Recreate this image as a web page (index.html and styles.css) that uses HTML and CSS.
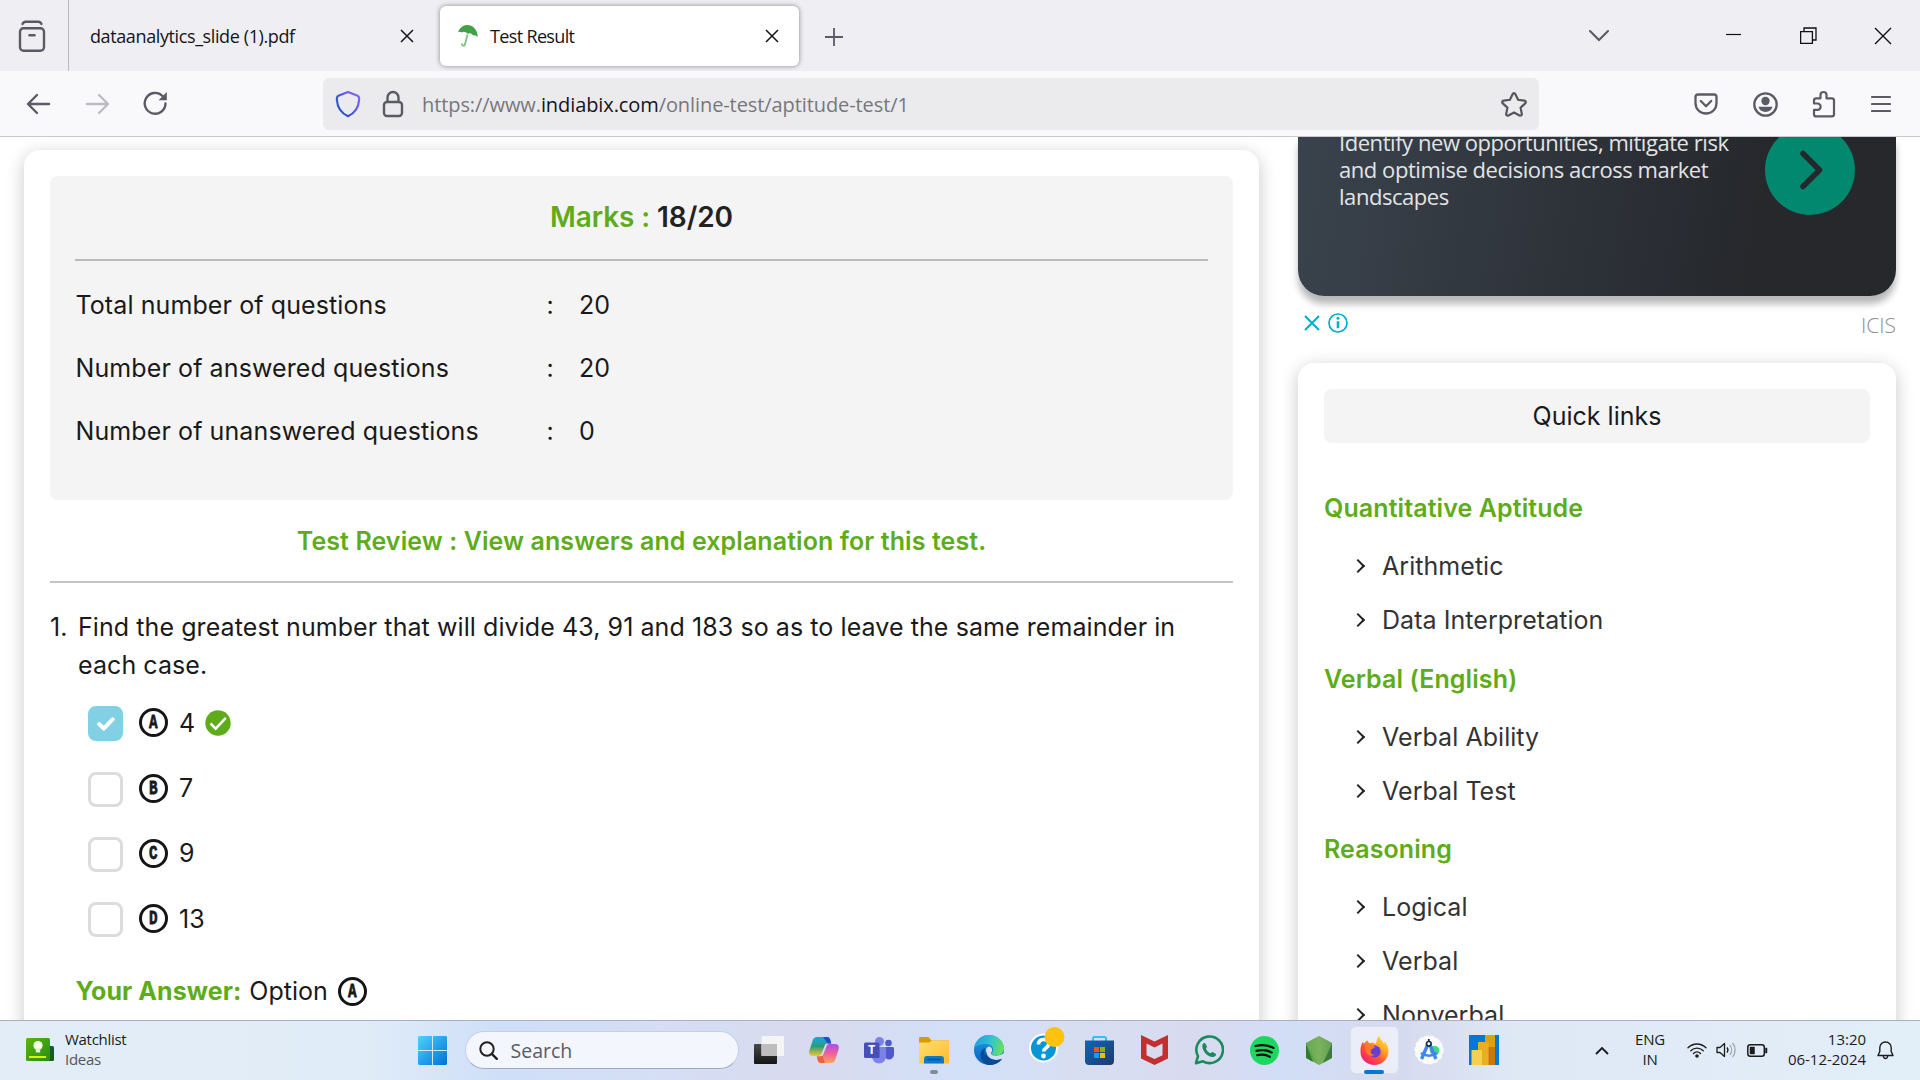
FILE: index.html
```html
<!DOCTYPE html>
<html lang="en">
<head>
<meta charset="utf-8">
<title>Test Result</title>
<link rel="stylesheet" href="styles.css">
</head>
<body>
<svg width="0" height="0" class="defs">
  <defs>
    <linearGradient id="shieldG" x1="0" y1="1" x2="1" y2="0"><stop offset="0" stop-color="#1d4fc4"/><stop offset=".5" stop-color="#4a5be0"/><stop offset="1" stop-color="#9a62ee"/></linearGradient>
    <linearGradient id="winG" x1="0" y1="0" x2="1" y2="1"><stop offset="0" stop-color="#4fd3ff"/><stop offset="1" stop-color="#0071d4"/></linearGradient>
    <linearGradient id="copA" x1="0" y1="0" x2="0" y2="1"><stop offset="0" stop-color="#18a5e8"/><stop offset=".5" stop-color="#2a9d7a"/><stop offset="1" stop-color="#f2c92a"/></linearGradient>
    <linearGradient id="copB" x1="0" y1="0" x2="0" y2="1"><stop offset="0" stop-color="#a64ff0"/><stop offset=".5" stop-color="#f0609a"/><stop offset="1" stop-color="#ffa45c"/></linearGradient>
    <linearGradient id="foldG" x1="0" y1="0" x2="1" y2="1"><stop offset="0" stop-color="#ffdf70"/><stop offset="1" stop-color="#fdbc2a"/></linearGradient>
    <linearGradient id="edgeA" x1="0" y1=".3" x2="1" y2=".5"><stop offset="0" stop-color="#1d9fe0"/><stop offset=".55" stop-color="#35c3d0"/><stop offset="1" stop-color="#6be05a"/></linearGradient>
    <linearGradient id="edgeB" x1="0" y1="0" x2="0" y2="1"><stop offset="0" stop-color="#1f9de4"/><stop offset="1" stop-color="#0a5fc0"/></linearGradient>
    <linearGradient id="storeG" x1="0" y1="0" x2="1" y2="1"><stop offset="0" stop-color="#0a68b8"/><stop offset="1" stop-color="#233a66"/></linearGradient>
    <linearGradient id="nodeG" x1="0" y1="0" x2="1" y2="0"><stop offset="0" stop-color="#4a9c3c"/><stop offset=".5" stop-color="#74ad58"/><stop offset="1" stop-color="#4c8f42"/></linearGradient>
    <linearGradient id="foxG" x1="1" y1="0" x2=".2" y2="1"><stop offset="0" stop-color="#fff04a"/><stop offset=".35" stop-color="#ffb02a"/><stop offset=".65" stop-color="#ff5535"/><stop offset="1" stop-color="#f01878"/></linearGradient>
    <linearGradient id="tvG" x1="0" y1="0" x2="0" y2="1"><stop offset="0" stop-color="#484848"/><stop offset="1" stop-color="#151515"/></linearGradient>
    <linearGradient id="watchG" x1="0" y1="0" x2="1" y2="1"><stop offset="0" stop-color="#56b80e"/><stop offset="1" stop-color="#2b8c14"/></linearGradient>
  </defs>
</svg>

<header class="tabs">
  <div class="recent">
    <svg width="28" height="34" viewBox="0 0 28 34" fill="none" stroke="#5b5b66" stroke-width="2.4" stroke-linecap="round"><path d="M4.500 4q1-2.300 3-2.300h13q2 0 3 2.300"/><rect x="2" y="8.200" width="24" height="22.500" rx="3.500"/><path d="M11.500 15.200h5"/></svg>
  </div>
  <div class="tab"><span class="tab-title t1">dataanalytics_slide (1).pdf</span><svg class="x" viewBox="0 0 14 14"><path d="M1 1l12 12M13 1L1 13"/></svg></div>
  <div class="tab active">
    <svg class="fav" width="22" height="24" viewBox="0 0 22 22" preserveAspectRatio="none"><path d="M1 7.500C3 2 9-.5 14 1.500c4.500 2 7 6 6.500 10.500-1.500-1.600-3-2-4.500-1.500-1.500-2-3-2.400-5-1.500C8.500 7 6.500 6.500 5 7.800 3.500 6.800 2.200 6.800 1 7.500z" fill="#43a047"/><path d="M10.500 9.500L8 18.500c-.6 2.200-3.500 1.600-3-.7" fill="none" stroke="#86bd86" stroke-width="1.800"/></svg>
    <span class="tab-title t2">Test Result</span><svg class="x" viewBox="0 0 14 14"><path d="M1 1l12 12M13 1L1 13"/></svg></div>
  <svg class="plus" width="20" height="20" viewBox="0 0 20 20"><path d="M10 1v18M1 10h18" stroke="#5b5b66" stroke-width="1.800"/></svg>
  <div class="winbtns">
    <svg width="22" height="14" viewBox="0 0 22 14"><path d="M2 2l9 9 9-9" fill="none" stroke="#5b5b66" stroke-width="2.100" stroke-linecap="round"/></svg>
    <svg width="16" height="16" viewBox="0 0 16 16"><path d="M0 6.500h15" stroke="#111" stroke-width="1.200"/></svg>
    <svg width="17" height="17" viewBox="0 0 17 17"><path d="M.6 4.600h11.800v11.800H.6zM4 4.600V1h12v12h-3.500" fill="none" stroke="#111" stroke-width="1.300"/></svg>
    <svg width="18" height="18" viewBox="0 0 18 18"><path d="M1 1l16 16M17 1L1 17" stroke="#111" stroke-width="1.400"/></svg>
  </div>
</header>

<nav class="toolbar">
  <div class="navbtns">
    <svg width="25" height="24" viewBox="0 0 25 22"><path d="M23 11H2.500M11 2L2 11l9 9" fill="none" stroke="#5b5b66" stroke-width="2.400" stroke-linecap="round" stroke-linejoin="round"/></svg>
    <svg width="25" height="24" viewBox="0 0 25 22"><path d="M2 11h20.500M14 2l9 9-9 9" fill="none" stroke="#bcbcc3" stroke-width="2.400" stroke-linecap="round" stroke-linejoin="round"/></svg>
    <svg width="25" height="25" viewBox="0 0 25 25"><path d="M22.500 12.500a10.400 10.400 0 1 1-3-7.500" fill="none" stroke="#5b5b66" stroke-width="2.400" stroke-linecap="round"/><path d="M23.800 1v8.200h-8.200z" fill="#5b5b66"/></svg>
  </div>
  <div class="urlbar">
    <svg width="26" height="28" viewBox="0 0 26 28"><path d="M13 2l9.600 3.800c1.600.7 1.700 1.700 1.500 4.200C23.600 17 20 23 13 26.200 6 23 2.400 17 1.900 10c-.2-2.500-.1-3.500 1.500-4.200z" fill="none" stroke="url(#shieldG)" stroke-width="2.200" stroke-linejoin="round"/></svg>
    <svg width="22" height="28" viewBox="0 0 22 28"><rect x="2" y="12" width="18" height="14" rx="3" fill="none" stroke="#5b5b66" stroke-width="2.400"/><path d="M5.500 12V7.500a5.500 5.500 0 0 1 11 0V12" fill="none" stroke="#5b5b66" stroke-width="2.400"/></svg>
    <span class="url">https://www.<b>indiabix.com</b>/online-test/aptitude-test/1</span>
    <svg class="star" width="28" height="27" viewBox="0 0 28 27"><path d="M14 2.200c.7 0 1.100.4 1.400 1l2.700 5.600 6.200.8c1.500.2 2 1.800.9 2.800l-4.600 4.300 1.200 6.200c.2 1.400-1.100 2.200-2.300 1.600L14 21.500l-5.500 3c-1.200.6-2.500-.2-2.300-1.600l1.200-6.200-4.600-4.300c-1.100-1-.6-2.600.9-2.800l6.200-.8 2.700-5.600c.3-.6.7-1 1.400-1z" fill="none" stroke="#55555f" stroke-width="2.200"/></svg>
  </div>
  <div class="tools">
    <svg width="24" height="22" viewBox="0 0 24 22"><path d="M4 1.500h16c1.600 0 2.500.9 2.500 2.500v6c0 6-4.500 10.500-10.500 10.500S1.500 16 1.500 10V4c0-1.600.9-2.500 2.500-2.500zM6.800 8l5.200 5.200L17.200 8" fill="none" stroke="#5b5b66" stroke-width="2.300" stroke-linecap="round" stroke-linejoin="round"/></svg>
    <svg width="25" height="25" viewBox="0 0 25 25"><circle cx="12.500" cy="12.500" r="11.200" fill="none" stroke="#5b5b66" stroke-width="2.300"/><circle cx="12.500" cy="9" r="4.200" fill="#5b5b66"/><path d="M5.500 14.800h14c-.6 3-3.500 5.200-7 5.200s-6.400-2.200-7-5.200z" fill="#5b5b66"/></svg>
    <svg width="24" height="28" viewBox="0 0 24 28"><path d="M8.500 8.300V5a3 3 0 0 1 6 0v3.300h5.300c1.500 0 2.200.7 2.200 2.200v13.700c0 1.500-.7 2.200-2.200 2.200H4.200c-1.500 0-2.200-.7-2.200-2.200v-4.400h3.500a3 3 0 0 0 0-6.300H2v-3c0-1.500.7-2.200 2.200-2.200z" fill="none" stroke="#5b5b66" stroke-width="2.200" stroke-linejoin="round"/></svg>
    <svg width="20" height="18" viewBox="0 0 20 18"><path d="M1 2h18M1 9h18M1 16h18" stroke="#5b5b66" stroke-width="2.200" stroke-linecap="round"/></svg>
  </div>
</nav>

<main class="page">
  <section class="card result">
    <div class="summary">
      <h1 class="marks"><span class="g">Marks :</span> 18/20</h1>
      <div class="stat"><span class="lbl">Total number of questions</span><span>:</span><span>20</span></div>
      <div class="stat"><span class="lbl">Number of answered questions</span><span>:</span><span>20</span></div>
      <div class="stat"><span class="lbl">Number of unanswered questions</span><span>:</span><span>0</span></div>
    </div>
    <h2 class="review">Test Review : View answers and explanation for this test.</h2>
    <div class="question"><span class="num">1.</span><p>Find the greatest number that will divide 43, 91 and 183 so as to leave the same remainder in each case.</p></div>
    <div class="options">
      <div class="opt"><span class="box on"><svg width="18" height="14" viewBox="0 0 18 14"><path d="M2.200 7l4.600 4.600L15.600 2.400" fill="none" stroke="#fff" stroke-width="4" stroke-linecap="round" stroke-linejoin="round"/></svg></span><span class="letter"><i>A</i></span><span>4</span>
        <svg class="ok" width="26" height="26" viewBox="0 0 26 26"><circle cx="13" cy="13" r="12.700" fill="#5eac1a"/><path d="M5.500 13.500l5.200 5.200L20.800 7.800" fill="none" stroke="#fff" stroke-width="2.500"/></svg></div>
      <div class="opt"><span class="box"></span><span class="letter"><i>B</i></span><span>7</span></div>
      <div class="opt"><span class="box"></span><span class="letter"><i>C</i></span><span>9</span></div>
      <div class="opt"><span class="box"></span><span class="letter"><i>D</i></span><span>13</span></div>
    </div>
    <div class="answer"><b>Your Answer:</b><span>Option</span><span class="letter"><i>A</i></span></div>
  </section>

  <aside class="side">
    <div class="ad">
      <p class="ad-text">Identify new opportunities, mitigate risk<br>and optimise decisions across market<br>landscapes</p>
      <div class="go"><svg width="26" height="40" viewBox="0 0 26 40"><path d="M6 3.500L22.500 20 6 36.500" fill="none" stroke="#23282c" stroke-width="5.500" stroke-linecap="round" stroke-linejoin="round"/></svg></div>
    </div>
    <div class="adinfo">
      <svg width="16" height="16" viewBox="0 0 16 16"><path d="M1 1l14 14M15 1L1 15" stroke="#00aecd" stroke-width="2.100"/></svg>
      <svg width="20" height="20" viewBox="0 0 20 20"><circle cx="10" cy="10" r="9" fill="none" stroke="#00aecd" stroke-width="1.700"/><circle cx="10" cy="5.300" r="1.500" fill="#00aecd"/><path d="M10 8.200v7" stroke="#00aecd" stroke-width="2.600"/></svg>
      <span>ICIS</span>
    </div>
    <div class="card quick">
      <div class="quick-title">Quick links</div>
      <h3>Quantitative Aptitude</h3>
      <ul><li>Arithmetic</li><li>Data Interpretation</li></ul>
      <h3>Verbal (English)</h3>
      <ul><li>Verbal Ability</li><li>Verbal Test</li></ul>
      <h3>Reasoning</h3>
      <ul><li>Logical</li><li>Verbal</li><li>Nonverbal</li></ul>
    </div>
  </aside>
</main>

<footer class="taskbar">
  <div class="widget">
    <svg width="28" height="24" viewBox="0 0 28 24"><rect x="20" y="8" width="8" height="15" rx="1.500" fill="#175c20"/><rect width="24" height="23" rx="1.500" fill="url(#watchG)"/><circle cx="12" cy="7.500" r="4.600" fill="#f4ffe8"/><path d="M9.800 10h4.400v4.500H9.800z" fill="#e0f2cc"/><path d="M3 19h17" stroke="#d8f500" stroke-width="2"/></svg>
    <div class="wtxt"><span>Watchlist</span><span class="dim">Ideas</span></div>
  </div>
  <svg class="start" width="29" height="29" viewBox="0 0 29 29"><path d="M1 0h13v14H0V1zM15 0h13l1 1v13H15zM0 15h14v14H1l-1-1zM15 15h14v13l-1 1H15z" fill="url(#winG)"/></svg>
  <div class="search"><svg width="19" height="19" viewBox="0 0 19 19"><circle cx="8" cy="8" r="6.700" fill="none" stroke="#222" stroke-width="2"/><path d="M12.800 12.800l5 5" stroke="#222" stroke-width="2.400" stroke-linecap="round"/></svg><span>Search</span></div>
  <div class="apps">
    <div class="app"><svg width="30" height="28" viewBox="0 0 30 28"><rect y="8" width="23" height="20" rx="1" fill="url(#tvG)"/><rect x="7.500" width="22.500" height="20" rx="1" fill="#f4f4f4"/><path d="M7.500 8H23v12H7.500z" fill="#bdbdbd"/></svg></div>
    <div class="app"><svg width="30" height="28" viewBox="0 0 30 28"><path d="M8 1h10c2 0 2.600 1 3.300 3l.9 3.500h-3c-2 0-3 .6-3.700 2.500l-2.800 7.500c-.6 1.700-1.800 2.500-3.500 2.500H4c-3 0-4.500-2-3.700-5L3.600 4.500C4.300 2.200 5.600 1 8 1z" fill="url(#copA)"/><path d="M14 1h4c2 0 2.600 1 3.300 3l.9 3.500h-3.500L14 1z" fill="#1e4dca"/><path d="M22 27H12c-2 0-2.600-1-3.300-3l-.9-3.500h3c2 0 3-.6 3.700-2.500l2.800-7.500C17.900 8.800 19.100 8 20.800 8H26c3 0 4.500 2 3.700 5l-3.300 10.500c-.7 2.300-2 3.500-4.400 3.500z" fill="url(#copB)"/><path d="M7.800 20.500h3c1 0 2-.3 2.600-.8L16 27h-4c-2 0-2.600-1-3.300-3z" fill="#f0603a"/></svg></div>
    <div class="app"><svg width="30" height="27" viewBox="0 0 30 27"><circle cx="24.500" cy="6" r="3.300" fill="#5059c9"/><path d="M20 10h8.500c.9 0 1.500.6 1.500 1.500V17c0 3-2 5.500-5 5.500S20 20 20 17z" fill="#5059c9"/><circle cx="15.500" cy="4.500" r="4.500" fill="#7b83eb"/><path d="M8 10h14v9c0 4.500-3 7.500-7 7.500S8 23.500 8 19z" fill="#7b83eb"/><rect y="5.500" width="15.500" height="15.500" rx="1.500" fill="#464eb8"/><text x="7.700" y="17.300" class="tglyph">T</text></svg></div>
    <div class="app dot"><svg width="30" height="27" viewBox="0 0 30 27"><path d="M0 1.500C0 .7.600 0 1.500 0h8l3 3.500H29c.6 0 1 .5 1 1V12H0z" fill="#dc9a00"/><path d="M0 5.500h10l3-2h16c.6 0 1 .5 1 1V26.500H0z" fill="url(#foldG)"/><path d="M5 26.500V22c0-2 1-3 3-3h14c2 0 3 1 3 3v4.500z" fill="#0f78c8"/><path d="M9 22.500h12" stroke="#0a4b8c" stroke-width="1.500" stroke-linecap="round"/></svg></div>
    <div class="app"><svg width="30" height="30" viewBox="0 0 30 30"><circle cx="15" cy="15" r="15" fill="url(#edgeB)"/><path d="M0 14C1 6 7 0 15 0c8.500 0 15 6 15 13 0 5-3.500 7.500-7.500 7.500-4 0-5.500-1.500-4-3.500 2-4-1-8-6.500-8C6 9 1.500 11 0 14z" fill="url(#edgeA)"/><path d="M11 13c-2 7 2 14.500 9 14.500 3 0 6-1.500 7.800-3.700C25 28 20.500 30 15 30 9 29 6 24 6.500 19c.3-2.600 2-5 4.500-6z" fill="#0b4a94"/><path d="M12 15.500c0-2.600 1.600-4 3.600-4 2.400 1 3.200 3.200 2 5.500-1.500 2 .4 3.700 4.400 3.700 2.500 0 5.500-.8 8-2.700v5c-2 1.200-5 2-7.500 2-6 0-10.500-4-10.500-9.500z" fill="#d6dff3"/><path d="M12 15.500c0 6 5 10 11 9.500 2-.2 3.500-.6 4.700-1.200L28 24c-3 4-8 6-13 6l-4-6z" fill="#0b4a94"/></svg></div>
    <div class="app"><svg class="help" width="36" height="36" viewBox="0 0 36 36"><circle cx="14.500" cy="21" r="13.500" fill="#0996d4" stroke="#fff" stroke-width="2"/><path d="M9.500 17.500c0-3.300 2.200-5 5.200-5s5 1.800 5 4.500c0 3.700-5 3.800-5 7.500" fill="none" stroke="#fff" stroke-width="3.600"/><circle cx="14.500" cy="29" r="2.400" fill="#fff"/><circle cx="25.500" cy="10" r="10" fill="#ffc20e"/></svg></div>
    <div class="app"><svg width="29" height="29" viewBox="0 0 29 29"><path d="M8 6V2.500C8 1.400 8.500 1 9.500 1h10c1 0 1.500.4 1.500 1.500V6" fill="none" stroke="#2cc4f4" stroke-width="2"/><path d="M0 4.500h29V25c0 2.500-1.500 4-4 4H4c-2.500 0-4-1.500-4-4z" fill="url(#storeG)"/><path d="M9 11h5v5H9z" fill="#f25022"/><path d="M15 11h5v5h-5z" fill="#7fba00"/><path d="M9 17h5v5H9z" fill="#00a4ef"/><path d="M15 17h5v5h-5z" fill="#ffb900"/></svg></div>
    <div class="app"><svg width="27" height="30" viewBox="0 0 27 30"><path d="M0 0l13.500 6.500L27 0v23.500L13.500 30 0 23.500zM5.500 8.500v11.700l8 3.800 8-3.800V8.500l-8 4z" fill="#c22f2f" fill-rule="evenodd"/></svg></div>
    <div class="app"><svg width="30" height="30" viewBox="0 0 30 30"><path d="M2 28.200l2-7A13.300 13.300 0 1 1 9 26.300z" fill="none" stroke="#1c8a5a" stroke-width="2.600" stroke-linejoin="round"/><path d="M8.500 9.500c.8-1.700 2.300-2 3-.8l1.400 2.700c.3.900-1 1.700-.9 2.500.9 1.900 2.400 3.400 4.400 4.300.9.100 1.500-1.300 2.300-1.100l3 1.600c.9.700.2 2.300-1.500 3C14.500 23.500 7 15.500 8.500 9.500z" fill="#1c8a5a"/></svg></div>
    <div class="app"><svg width="29" height="29" viewBox="0 0 29 29"><circle cx="14.500" cy="14.500" r="14.500" fill="#1ed760"/><path d="M5.500 10c6-1.600 12.500-1 18 1.900M6.500 14.800c5-1.300 10.500-.8 15.200 1.600M7.300 19.200c4.300-1 8.700-.6 12.500 1.500" fill="none" stroke="#111" stroke-width="2.300" stroke-linecap="round"/></svg></div>
    <div class="app"><svg width="26" height="29" viewBox="0 0 26 29"><path d="M13 0l13 7v14.500L13 29 0 21.500V7z" fill="url(#nodeG)"/><path d="M13 0l13 7-8 20L13 29 1.500 11 0 7z" fill="#82b866" opacity=".45"/><path d="M0 8l7 18-7-4z" fill="#2f7d32"/><path d="M26 8l-9 19 9-5z" fill="#3c7c38"/></svg></div>
    <div class="app current"><svg width="29" height="29" viewBox="0 0 29 29"><path d="M19 0c1 3.500 4 4.500 5 8 .6-.8.500-1.800.3-2.800C27.500 8.500 29 12 28.500 16c-.7 7.500-6.500 13-14 13S.5 23.500.5 16C.3 12 1 8.500 3 5.500c.2 1 .4 1.600 1 2C5 6.300 6 5 8 4.200c-.2 1.300.3 2 1.500 3C12 6.500 14 7 16 8c.5-3 1-6 3-8z" fill="url(#foxG)"/><circle cx="14.700" cy="15.500" r="6" fill="#6a3fd0"/><path d="M5 8.500c3-.7 5.500 0 7.500 1.500l3 1-4.500 2.700c-1 3 1 5.500 4 5-3 2.500-9 .5-9.500-4.500z" fill="#ff7a28"/></svg></div>
    <div class="app"><svg width="30" height="30" viewBox="0 0 30 30"><circle cx="15" cy="15" r="13.800" fill="#fafbfd" stroke="#fafbfd" stroke-width="1.500" stroke-dasharray="4 2"/><circle cx="20.500" cy="15.500" r="4.800" fill="#3ddc84"/><path d="M14 9L7.500 24M15.500 9L22 24" stroke="#4285f4" stroke-width="3.400" fill="none"/><path d="M7 18c4.500 3.500 11.500 3.500 16 0" fill="none" stroke="#4285f4" stroke-width="2.500"/><circle cx="14.800" cy="8.800" r="2.300" fill="#fff" stroke="#173042" stroke-width="1.700"/><path d="M14.800 4v2.500" stroke="#173042" stroke-width="1.800"/></svg></div>
    <div class="app"><svg width="30" height="30" viewBox="0 0 30 30"><path d="M0 0h30v30H0z" fill="#0078d4"/><path d="M16 0h10v30H16z" fill="#dfa010"/><path d="M19 12h7v18h-7z" fill="#c5790e"/><path d="M9 7h10.500v23H9z" fill="#e8b021"/><path d="M2.500 15H13v15H2.500z" fill="#f5d04e"/></svg></div>
  </div>
  <div class="tray">
    <svg class="up" width="14" height="9" viewBox="0 0 14 9"><path d="M1 8l6-6 6 6" fill="none" stroke="#1c1c1c" stroke-width="1.900"/></svg>
    <div class="lang"><span>ENG</span><span>IN</span></div>
    <svg class="wifi" width="20" height="16" viewBox="0 0 20 16" fill="none" stroke="#1c1c1c" stroke-width="1.400" stroke-linecap="round"><path d="M1 5.800c5-5 13-5 18 0M3.800 8.700c3.500-3.400 8.900-3.400 12.400 0M6.500 11.400c2-1.900 5-1.900 7 0"/><circle cx="10" cy="14" r="1.100" fill="#1c1c1c"/></svg>
    <svg class="vol" width="21" height="16" viewBox="0 0 21 16" fill="none" stroke="#1c1c1c" stroke-width="1.300" stroke-linejoin="round"><path d="M1 5.500h3L8.500 1.500v13L4 10.500H1zM11 5.500c1.200 1.500 1.200 3.500 0 5"/><path d="M13.800 3.200c2.400 2.800 2.400 6.800 0 9.600M16.500 1c3.500 4 3.500 10 0 14" stroke="#9fa5ae"/></svg>
    <svg class="bat" width="21" height="13" viewBox="0 0 21 13"><rect x=".8" y=".8" width="16.500" height="11.400" rx="2.500" fill="none" stroke="#1c1c1c" stroke-width="1.500"/><path d="M3 3h4.500v7H3zM18.500 4h1.500v5h-1.500z" fill="#1c1c1c" stroke="#1c1c1c" stroke-width=".5"/></svg>
    <div class="clock"><span>13:20</span><span>06-12-2024</span></div>
    <svg width="17" height="19" viewBox="0 0 17 19"><path d="M8.500 1C5 1 2.800 3.500 2.800 6.800v3.700L1 14.500h15l-1.800-4V6.800C14.200 3.500 12 1 8.500 1zM6.300 15c.3 3.300 4.100 3.300 4.400 0" fill="none" stroke="#1c1c1c" stroke-width="1.400" stroke-linejoin="round"/></svg>
  </div>
</footer>
</body>
</html>
```
FILE: styles.css
```css
* { box-sizing: border-box; }
body {
  margin: 0; width: 1920px; height: 1080px; overflow: hidden;
  display: flex; flex-direction: column;
  background: #fff; color: #1a1a1a;
  font-family: Inter, "Liberation Sans", sans-serif; font-size: 25px;
}
h1, h2, h3, p, ul { margin: 0; padding: 0; }
svg { flex: none; display: block; }
.defs { position: absolute; }

/* tab strip */
.tabs { height: 71px; flex: none; background: #efeef3; display: flex; align-items: center; font-family: "Open Sans", "Noto Sans", sans-serif; }
.recent { width: 69px; height: 71px; border-right: 1px solid #b9b9c0; display: flex; align-items: center; padding: 2px 0 0 18px; }
.tab { width: 359px; height: 60px; display: flex; align-items: center; padding: 0 14px 0 21px; margin-right: 12px; }
.tab.active { background: #fff; border-radius: 6px; box-shadow: 0 0 5px rgba(0,0,0,.45); padding: 0 20px 0 17px; margin-right: 25px; }
.tab-title { font-size: 18px; flex: 1; color: #15141a; white-space: nowrap; padding-top: 1px; }
.t1 { letter-spacing: -.39px; }
.t2 { letter-spacing: -.65px; margin-left: 11px; }
.x { width: 14px; height: 14px; stroke: #15141a; stroke-width: 1.5; }
.plus { margin-top: 3px; }
.winbtns { margin-left: auto; display: flex; align-items: center; padding-right: 28px; }
.winbtns svg:nth-child(2) { margin-left: 116px; }
.winbtns svg:nth-child(3) { margin-left: 58px; }
.winbtns svg:nth-child(4) { margin-left: 57px; }

/* navigation toolbar */
.toolbar { height: 66px; flex: none; background: #f9f9fb; border-bottom: 1px solid #c9c9cc; display: flex; align-items: center; padding-left: 26px; font-family: "Open Sans", "Noto Sans", sans-serif; }
.navbtns { width: 297px; display: flex; align-items: center; gap: 33.500px; }
.urlbar { width: 1216px; height: 52px; border-radius: 6px; background: #ebebed; display: flex; align-items: center; padding: 0 11px 0 12px; }
.urlbar svg:nth-child(2) { margin-left: 21px; }
.url { margin-left: 18px; padding-top: 1px; font-size: 20px; letter-spacing: -.09px; color: #77777c; white-space: nowrap; }
.url b { font-weight: 400; color: #15141a; }
.star { margin-left: auto; margin-top: 1px; }
.tools { margin-left: auto; display: flex; align-items: center; padding: 1px 29px 0 0; gap: 34.700px; }

/* page */
.page { height: 883px; flex: none; display: flex; justify-content: space-between; align-items: flex-start; padding: 0 24px; overflow: hidden; background: #fff; }
.card { background: #fff; border-radius: 16px; box-shadow: 0 4px 18px rgba(0,0,0,.22); }
.result { width: 1235px; height: 960px; margin-top: 13px; padding: 26px; }
.summary { height: 324px; background: #f4f4f4; border-radius: 8px; padding: 0 25px; }
.marks { height: 85px; border-bottom: 2px solid #bbb; margin-bottom: 12px; text-align: center; font-size: 28px; line-height: 83px; font-weight: 600; letter-spacing: -.1px; color: #222; }
.g { color: #5eac1a; }
.stat { height: 63px; display: grid; grid-template-columns: 471px 32.500px 1fr; align-items: center; padding-left: .5px; }
.lbl { letter-spacing: .1px; white-space: nowrap; }
.review { height: 83px; border-bottom: 2px solid #c4c4c4; text-align: center; font-size: 25px; line-height: 83px; font-weight: 600; letter-spacing: .09px; color: #5eac1a; white-space: nowrap; }
.question { display: flex; line-height: 38px; margin-top: 25px; }
.num { width: 28px; flex: none; }
.question p { width: 1120px; letter-spacing: .08px; }
.options { margin: 6px 0 0 38px; }
.opt { height: 65.400px; display: flex; align-items: center; line-height: 38px; }
.box { width: 35px; height: 35px; border: 3px solid #dcdcdc; border-radius: 8px; margin: 2px 16px 0 0; display: flex; align-items: center; justify-content: center; }
.box.on { background: #81d0e4; border-color: #81d0e4; }
.letter { width: 29px; height: 29px; border: 3px solid #161616; border-radius: 50%; margin-right: 11px; display: flex; align-items: center; justify-content: center; }
.letter i { font: bold 21px/21px "Liberation Mono", monospace; -webkit-text-stroke: .8px #161616; transform: scaleX(.68); }
.ok { margin-left: 10px; }
.answer { display: flex; align-items: center; margin: 20.500px 0 0 25.500px; line-height: 38px; }
.answer b { color: #5eac1a; font-weight: 700; letter-spacing: .06px; margin-right: 8px; }
.answer .letter { margin-left: 10px; }

/* sidebar */
.side { width: 598px; }
.ad { height: 159px; overflow: visible; border-radius: 0 0 26px 26px; background: linear-gradient(100deg, #3a434d 0%, #2e333a 45%, #26282c 75%); box-shadow: 0 8px 7px rgba(0,0,0,.28); display: flex; align-items: flex-start; justify-content: space-between; padding: 0 41px; font-family: "Open Sans", "Noto Sans", sans-serif; }
.ad-text { color: #e2e4e6; font-size: 22px; line-height: 27px; letter-spacing: -.45px; margin-top: -8px; white-space: nowrap; }
.go { width: 90px; height: 90px; border-radius: 50%; background: #02886f; margin-top: -12px; display: flex; align-items: center; justify-content: center; }
.adinfo { height: 67px; display: flex; align-items: flex-start; padding: 17px 0 0 6px; gap: 8px; font: 300 21px/25px "Open Sans", "Noto Sans", sans-serif; color: #8e8e8e; }
.adinfo svg:first-child { margin-top: 2px; }
.adinfo span { margin-left: auto; }
.quick { height: 760px; padding: 26px; }
.quick-title { height: 54px; line-height: 54px; border-radius: 8px; background: #f4f4f4; text-align: center; margin-bottom: 34px; }
.quick h3 { height: 62.500px; line-height: 62.500px; font-size: 25px; font-weight: 600; color: #5eac1a; letter-spacing: .09px; }
.quick ul { list-style: none; }
.quick li { height: 54px; display: flex; align-items: center; padding-left: 30px; padding-bottom: .5px; color: #333; letter-spacing: .05px; }
.quick li::before { content: ""; width: 8px; height: 8px; border: solid #222; border-width: 2px 2px 0 0; transform: rotate(45deg); margin: 0 19.500px 0 -1.500px; }

/* taskbar */
.taskbar { height: 60px; flex: none; border-top: 1px solid #a9b1c0; background: linear-gradient(90deg, #e3edf7 0, #e0ecf7 19%, #cfdff8 26%, #d5def4 35%, #d8daee 42%, #d2e0f8 50%, #d8ddf0 58%, #d8dbef 62%, #d2def7 67%, #d6daee 73%, #dfe9f6 79%, #e2eef8 100%); display: flex; align-items: center; font-family: "Open Sans", "Noto Sans", sans-serif; padding-bottom: 1px; }
.widget { width: 392px; display: flex; align-items: center; gap: 11px; margin-left: 26px; }
.wtxt, .lang, .clock { display: flex; flex-direction: column; font-size: 15px; line-height: 20px; letter-spacing: -.3px; color: #1c1c1c; margin-top: -2px; }
.dim { color: #555; }
.search { width: 274px; height: 38px; border-radius: 19px; margin: 0 3px 0 17.500px; background: #f3f6fd; border: 1px solid #c4cfe6; border-bottom-color: #9fa9bd; display: flex; align-items: center; padding-left: 13px; gap: 13px; font-size: 19.500px; color: #5a5d63; }
.apps { display: flex; }
.app { width: 55px; height: 48px; display: flex; align-items: center; justify-content: center; }
.app.dot::after { content: ""; position: absolute; width: 8px; height: 4px; border-radius: 2px; background: #868a96; margin-top: 44px; }
.help { margin: -10px 0 0 6px; }
.tglyph { font: bold 12.500px "Open Sans", sans-serif; fill: #fff; text-anchor: middle; }
.current { width: 49px; margin: 0 3px; border-radius: 6px; background: #ebeef8; border: 1px solid #dcdfeb; }
.current::after { content: ""; position: absolute; width: 20px; height: 4px; border-radius: 2px; background: #0078d4; margin-top: 44px; }
.tray { margin-left: auto; display: flex; align-items: center; padding-right: 26px; }
.lang { align-items: center; width: 34px; margin-left: 24px; margin-right: 20px; letter-spacing: -.2px; }
.wifi { margin-right: 9px; }
.vol { margin-right: 10px; }
.clock { align-items: flex-end; width: 98px; margin-right: 11px; letter-spacing: -.02px; }
```
